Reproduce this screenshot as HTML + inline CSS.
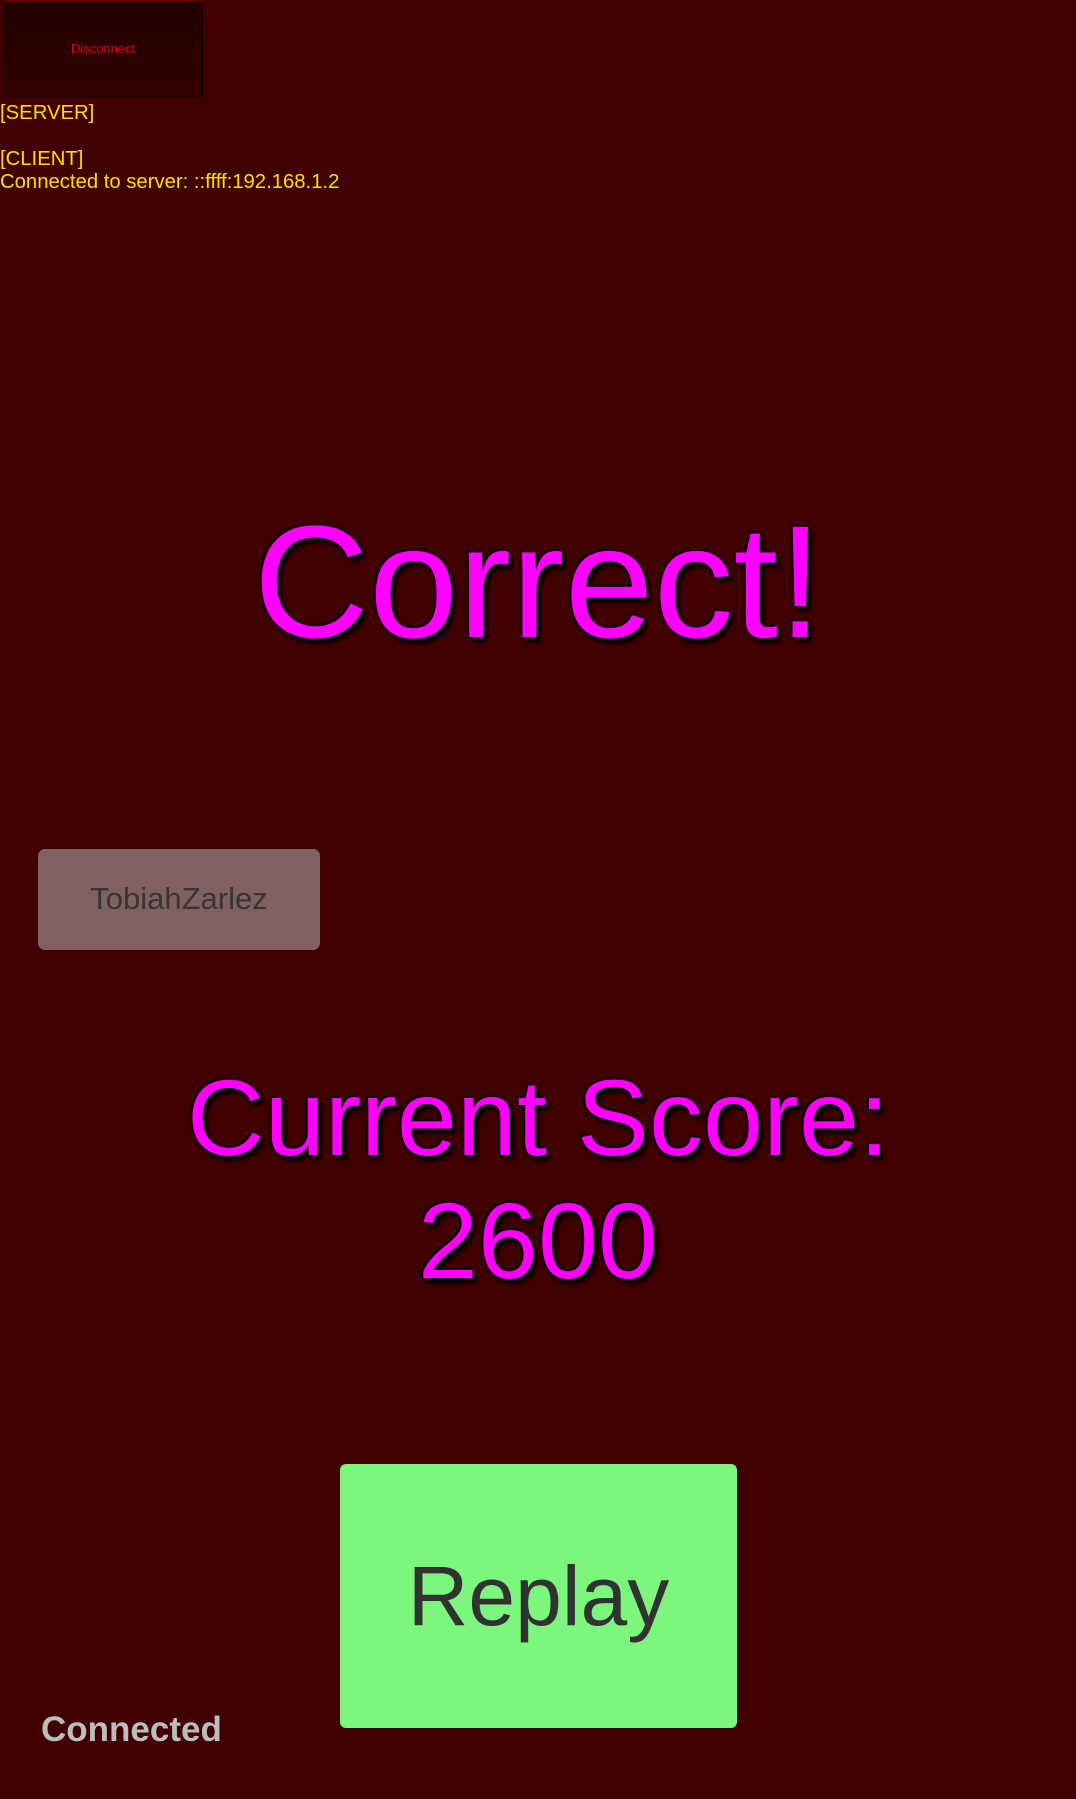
<!DOCTYPE html>
<html><head><meta charset="utf-8"><style>
html,body{margin:0;padding:0}
body{width:1076px;height:1799px;background:#400000;position:relative;overflow:hidden;font-family:"Liberation Sans",Arial,sans-serif}
.a{position:absolute;white-space:nowrap}
.big{color:#ff00ff;text-shadow:4px 5px 4px #000,0 0 4px #000,2px 2px 2px #000,-1px -1px 2px #000;line-height:1;text-align:center;left:0;width:1076px}
</style></head><body>
<div class="a" style="left:3px;top:0;width:198px;height:95px;border:1px solid #100000;border-top:2px solid #600000;border-radius:0 0 4px 4px;background:linear-gradient(#200000,#330000);"></div>
<div class="a" style="left:3px;top:40px;width:200px;text-align:center;color:#e00000;font-size:13px;line-height:18px">Disconnect</div>
<div class="a" style="left:0;top:102px;color:#ffdd00;font-size:20.3px;line-height:23px">[SERVER]<br><br>[CLIENT]<br>Connected to server: ::ffff:192.168.1.2</div>
<div class="a big" style="top:502px;font-size:160px;left:0">Correct!</div>
<div class="a" style="left:38px;top:849px;width:282px;height:101px;background:#806060;border-radius:7px"></div>
<div class="a" style="left:38px;top:883px;width:282px;text-align:center;color:#363636;font-size:31px;line-height:31px">TobiahZarlez</div>
<div class="a big" style="top:1064px;font-size:108px;left:0">Current Score:</div>
<div class="a big" style="top:1187px;font-size:108px;left:0">2600</div>
<div class="a" style="left:340px;top:1464px;width:397px;height:264px;background:#7cf67c;border-radius:6px"></div>
<div class="a" style="left:340px;top:1554px;width:397px;text-align:center;color:#323232;font-size:84px;line-height:84px">Replay</div>
<div class="a" style="left:41px;top:1712px;color:#bdbdbd;font-weight:bold;font-size:35px;line-height:35px">Connected</div>
</body></html>
